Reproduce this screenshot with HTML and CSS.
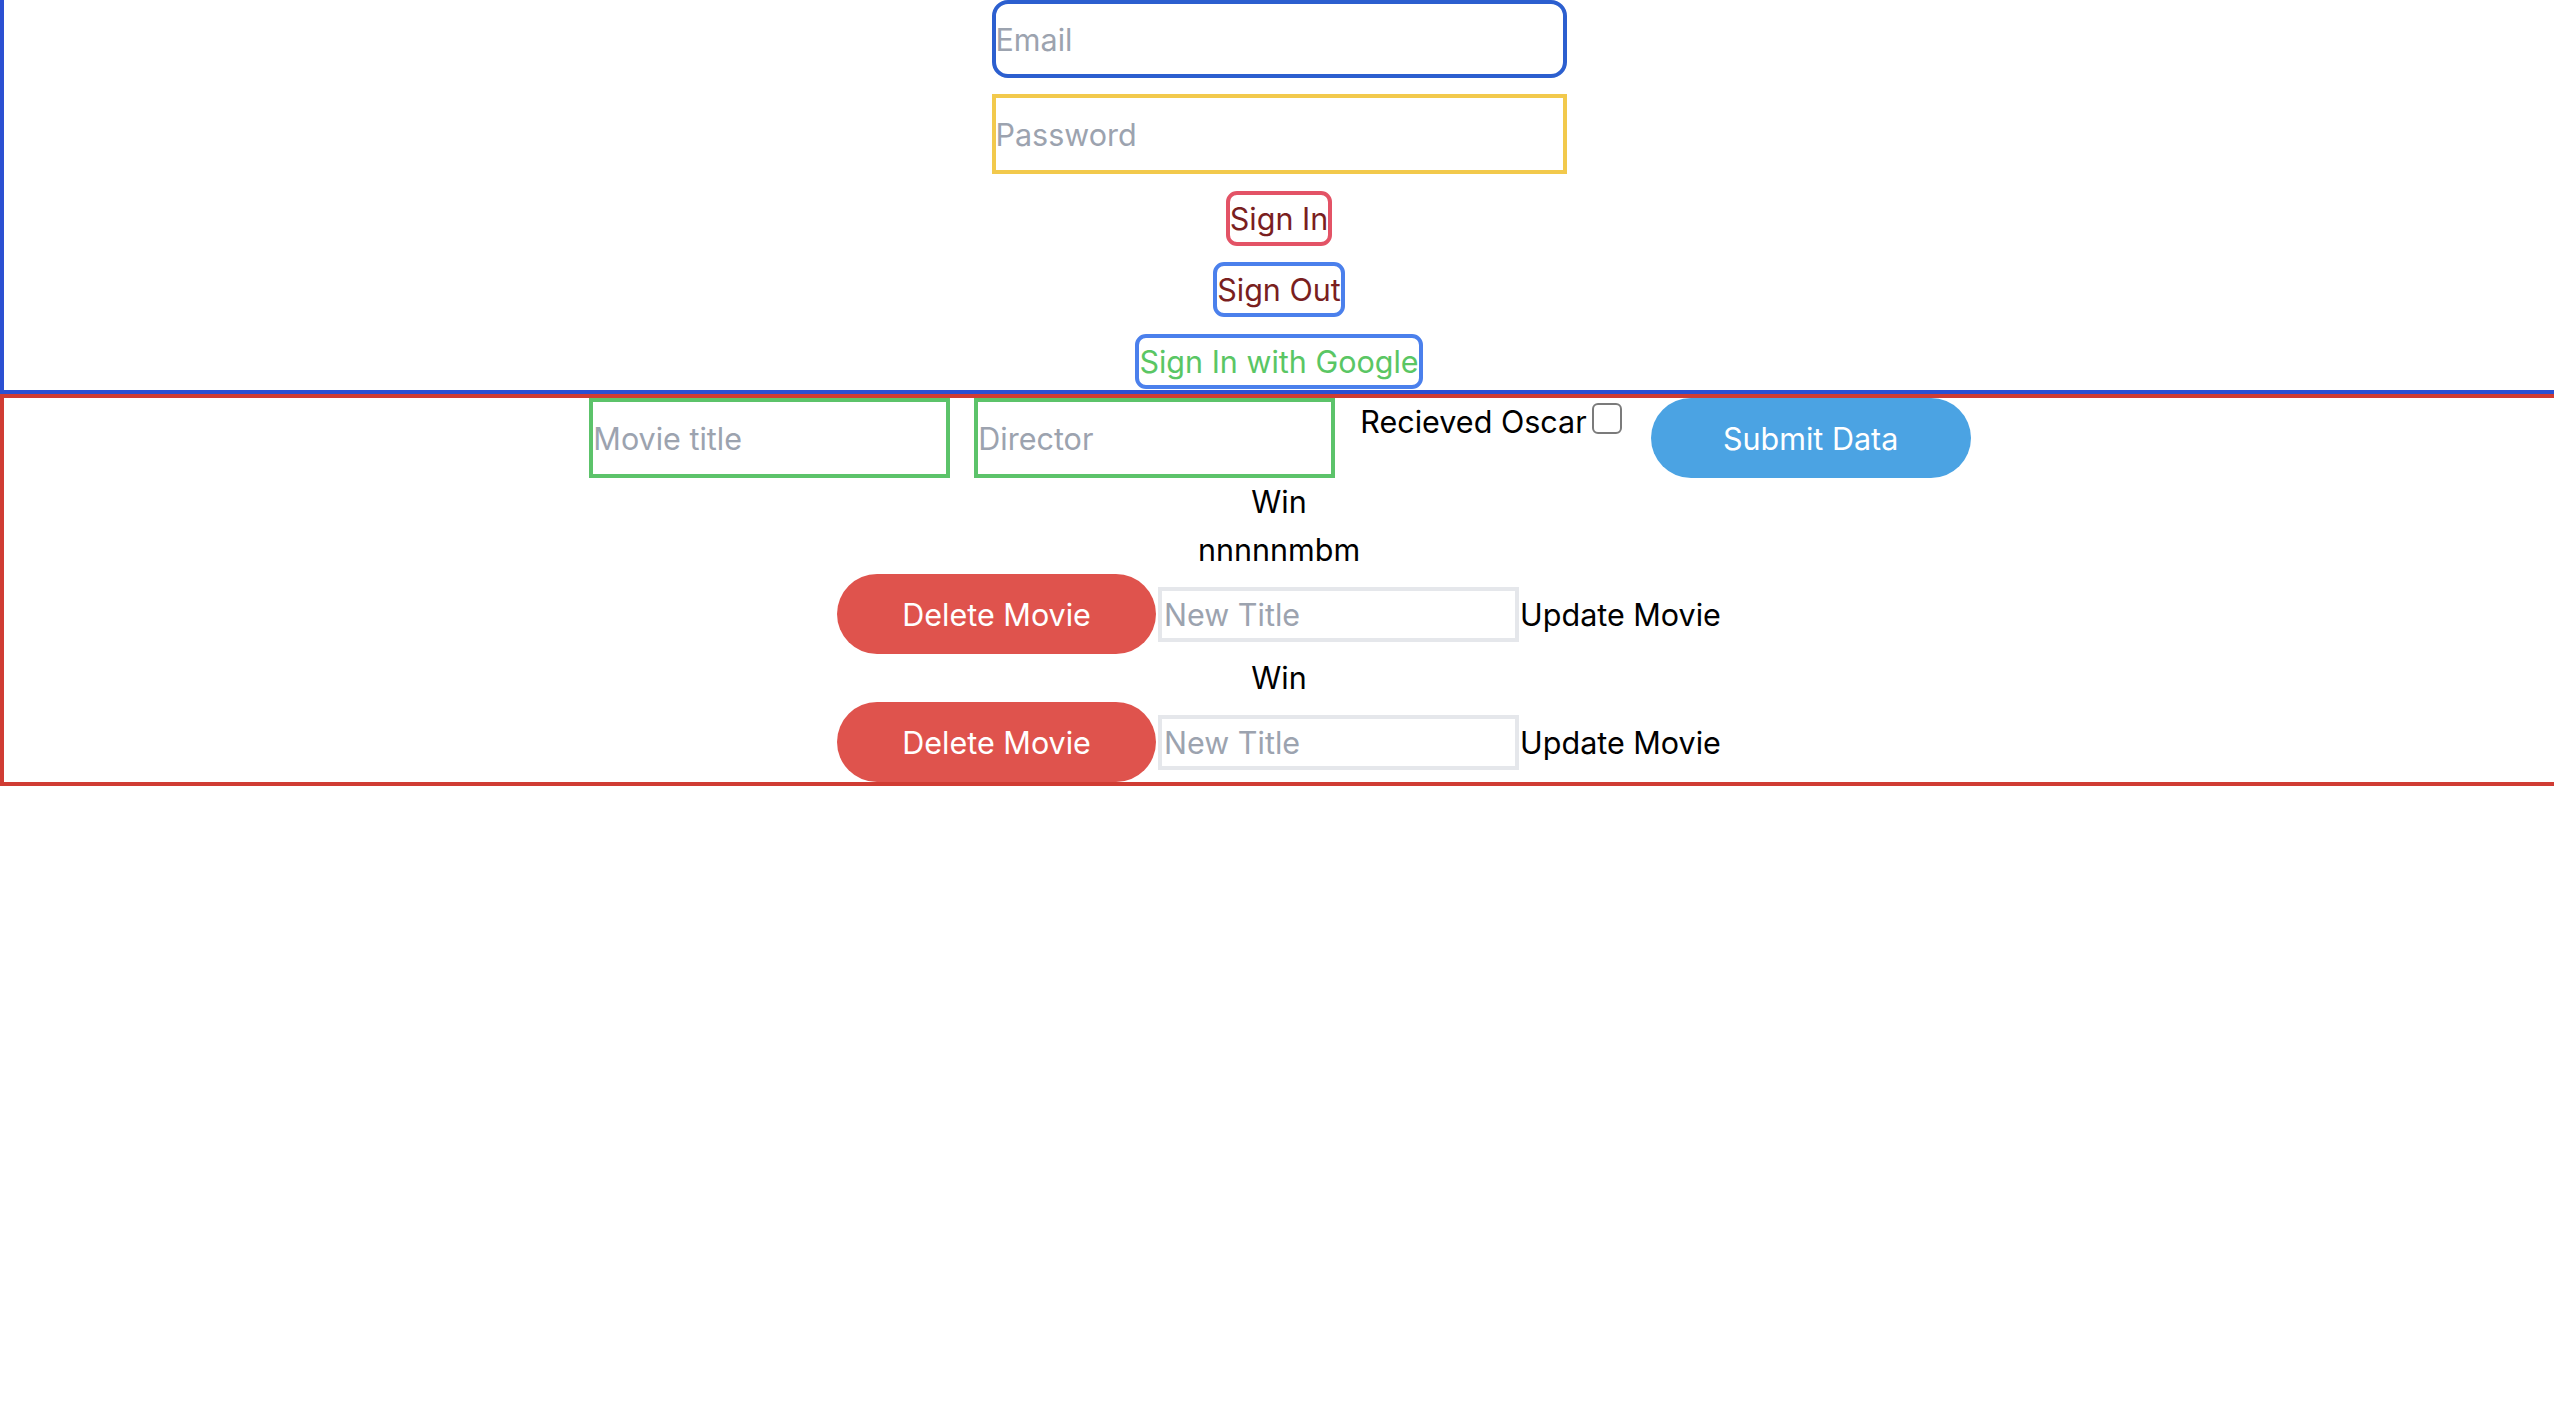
FILE: index.html
```html
<!DOCTYPE html>
<html lang="en">
<head>
    <meta charset="UTF-8">
    <meta name="viewport" content="width=device-width, initial-scale=1.0">
    <title>Movies</title>
    <link rel="stylesheet" href="styles.css">
</head>
<body>
    <div class="auth">
        <input class="field field-email" type="email" placeholder="Email">
        <input class="field field-password" type="password" placeholder="Password">
        <button class="auth-btn btn-signin">Sign In</button>
        <button class="auth-btn btn-signout">Sign Out</button>
        <button class="auth-btn btn-google">Sign In with Google</button>
    </div>

    <div class="movies">
        <div class="movie-form">
            <input class="field field-movie" type="text" placeholder="Movie title">
            <input class="field field-movie" type="text" placeholder="Director">
            <label class="oscar-label" for="oscar">Recieved Oscar</label>
            <input class="oscar-check" id="oscar" type="checkbox">
            <button class="submit-btn">Submit Data</button>
        </div>

        <div class="movie">
            <h1 class="movie-title">Win</h1>
            <p class="movie-director">nnnnnmbm</p>
            <div class="movie-actions">
                <button class="delete-btn">Delete Movie</button>
                <input class="field field-new-title" type="text" placeholder="New Title">
                <button class="update-btn">Update Movie</button>
            </div>
        </div>

        <div class="movie">
            <h1 class="movie-title">Win</h1>
            <p class="movie-director"></p>
            <div class="movie-actions">
                <button class="delete-btn">Delete Movie</button>
                <input class="field field-new-title" type="text" placeholder="New Title">
                <button class="update-btn">Update Movie</button>
            </div>
        </div>
    </div>
</body>
</html>
```

FILE: styles.css
```css
:root {
    --text: #000000;
    --placeholder: #9ca3af;
    --section-blue: #2b50d2;
    --section-red: #d03c33;
    --green: #5cc36a;
}

* {
    margin: 0;
    padding: 0;
    box-sizing: border-box;
}

body {
    font-family: Inter, "Liberation Sans", sans-serif;
    font-size: 30.5px;
    line-height: 48px;
    color: var(--text);
    background: #ffffff;
}

input,
button {
    font-family: inherit;
    font-size: inherit;
    color: inherit;
    background: none;
    outline: none;
}

button {
    cursor: pointer;
    border: none;
}

input::placeholder {
    color: var(--placeholder);
    opacity: 1;
}

.field {
    border: 4px solid #e5e7eb;
    padding: 0;
}

/* Auth block */
.auth {
    display: flex;
    flex-direction: column;
    align-items: center;
    border-left: 4px solid var(--section-blue);
    border-bottom: 4px solid var(--section-blue);
    padding-bottom: 1px;
}

.field-email {
    width: 575px;
    height: 78px;
    border-color: #2c5fcf;
    border-radius: 16px;
}

.field-password {
    width: 575px;
    height: 80px;
    margin-top: 16px;
    border-color: #f2c94c;
}

.auth-btn {
    height: 55px;
    line-height: 47px;
    border: 4px solid;
    border-radius: 11px;
    padding: 0;
    margin-top: 16px;
}

.btn-signin {
    color: #7a1f1f;
    border-color: #e35366;
    margin-top: 17px;
}

.btn-signout {
    color: #7a1f1f;
    border-color: #4b80ec;
}

.btn-google {
    color: #5ac664;
    border-color: #4b80ec;
    margin-top: 17px;
}

/* Movies block */
.movies {
    border-left: 4px solid var(--section-red);
    border-top: 4px solid var(--section-red);
    border-bottom: 4px solid var(--section-red);
}

.movie-form {
    display: flex;
    justify-content: center;
    align-items: flex-start;
}

.field-movie {
    width: 361px;
    height: 80px;
    margin: 0 12px;
    border-color: var(--green);
}

.oscar-label {
    margin-left: 13px;
}

.oscar-check {
    appearance: none;
    width: 30px;
    height: 31px;
    margin: 5px 0 0 5px;
    border: 2px solid #7b7b7b;
    border-radius: 6px;
    background: #ffffff;
}

.submit-btn {
    width: 320px;
    height: 80px;
    margin: 0 10px 0 29px;
    border-radius: 40px;
    background: #4ba3e3;
    color: #ffffff;
}

.movie {
    text-align: center;
}

.movie-title,
.movie-director {
    font-size: inherit;
    font-weight: 400;
    line-height: 48px;
}

.movie-actions {
    display: flex;
    justify-content: center;
    align-items: center;
}

.delete-btn {
    width: 319px;
    height: 80px;
    border-radius: 40px;
    background: #df534d;
    color: #ffffff;
}

.field-new-title {
    width: 361px;
    height: 55px;
    margin-left: 2px;
    padding-left: 2px;
}

.update-btn {
    padding: 0;
    margin-left: 1px;
}
```
